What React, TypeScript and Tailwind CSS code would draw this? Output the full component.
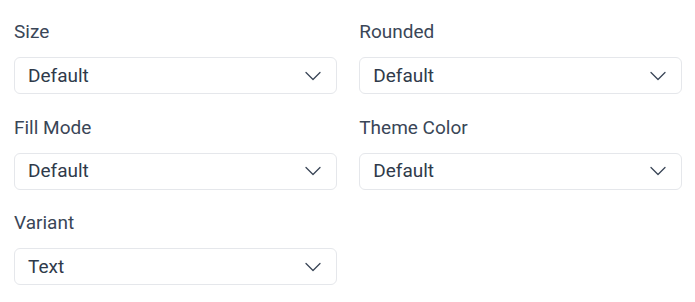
import React from "react";

function Field({ label, value }: { label: string; value: string }) {
  return (
    <div className="flex flex-col">
      <div className="text-[19px] leading-6 text-[#3a4657]">{label}</div>
      <div className="mt-[13px] flex h-[37px] items-center justify-between rounded-md border border-[#e5e7eb] bg-white pl-[13px] pr-[15px] text-[19px] leading-6 text-[#2f3a4a]">
        <span>{value}</span>
        <svg width="16" height="16" viewBox="0 0 16 16" fill="none" className="text-[#3a4657]">
          <path d="M1 4.5l7 7 7-7" stroke="currentColor" strokeWidth="1.3" strokeLinecap="round" strokeLinejoin="round" />
        </svg>
      </div>
    </div>
  );
}

export default function App() {
  return (
    <div
      className="min-h-[302px] w-[695px] bg-white pl-[14px] pr-[13px] pt-[20px]"
      style={{ fontFamily: "Roboto, 'Noto Sans', sans-serif" }}
    >
      <div className="grid grid-cols-2 gap-x-[22.5px] gap-y-[21.5px]">
        <Field label="Size" value="Default" />
        <Field label="Rounded" value="Default" />
        <Field label="Fill Mode" value="Default" />
        <Field label="Theme Color" value="Default" />
        <Field label="Variant" value="Text" />
      </div>
    </div>
  );
}
